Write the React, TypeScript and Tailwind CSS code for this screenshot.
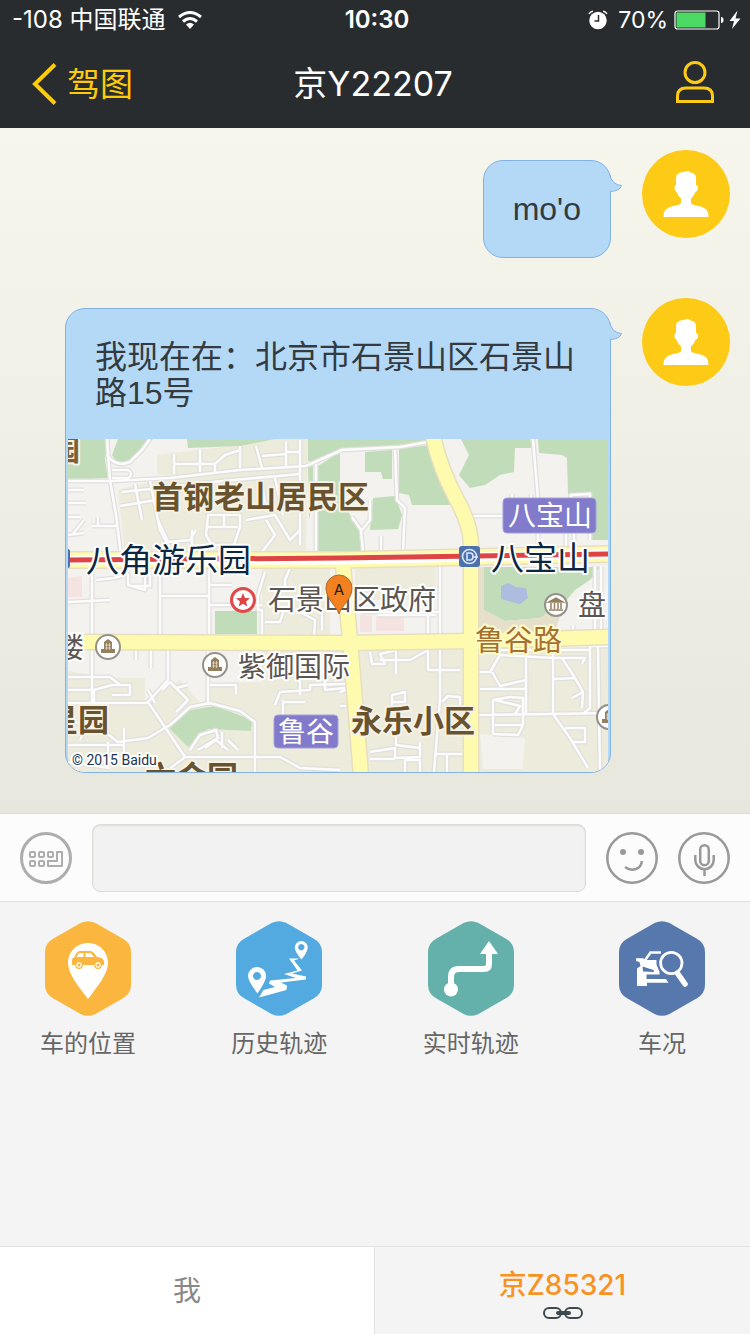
import type { ReactNode } from 'react';

const casing = '#e0dfdd';

const minorRoads = [
  'M68 481 L112 481 L170 478 L240 470 L306 466 L342 450 L400 447 L428 442',
  'M107 439 L110 480 L116 515 L121 555',
  'M107 455 Q116 468 130 462 L142 450 L150 439',
  'M112 470 L128 470 Q134 474 128 478 L112 478',
  'M68 490 H84 M68 503 H86 M68 517 H80 M84 520 L72 535 M68 535 L84 533',
  'M92 526 L116 526 M98 517 V526',
  'M174 454 V474 M200 449 V472 M240 446 V468 M174 464 L215 464 L225 455 L240 450 M215 464 V472',
  'M122 492 L160 488 L222 481 L300 474 M150 481 L160 530 L168 545 M120 506 L156 500 M135 484 L142 520',
  'M158 520 L168 542 L190 540 L196 530 M192 530 V545',
  'M208 515 H240 V527 L234 545 H212 L206 535 Z M206 527 H238 M224 515 V527',
  'M246 520 L275 515 L290 540 L300 530 M266 520 L275 535 L262 552 M275 478 L283 515 M262 480 L266 512 M300 440 V545 M286 442 V466 M286 452 H300 M256 446 L262 468 M262 456 L286 454',
  'M316 464 V552',
  'M395 450 L397 500 L405 508 L403 552 M352 517 L361 530 L363 552 M370 500 V520 L362 530 M381 536 V552',
  'M533 439 L538 500 L538 552 M512 494 V505 M531 494 V510 M470 516 H503 M571 500 V495 L590 494 V540 M566 533 V552 M574 533 V552',
  'M92 566 V640 M68 602 L110 600 M96 580 L114 578 L128 574 V585 L145 590 V566 M150 572 V586 H132',
  'M160 566 V640 M209 566 V640 M209 596 H160 M209 585 L232 585 M209 605 H262 M265 572 L258 595 V610 H262 V638 M290 568 L285 580 V590',
  'M265 622 H280 L284 610 M300 612 L315 620 L314 635 M322 612 V630 M288 606 V612',
  'M440 566 V640 M362 612 H440 M378 615 H436 M428 590 V640',
  'M595 566 V640 M601 566 V640 M573 625 V632',
  'M92 646 V715 L80 740 M136 650 V660 M151 650 V668 M168 650 V680 L148 702 L185 757 L168 770 M208 646 V705',
  'M68 690 H94 M68 703 L148 703 M68 720 L105 732 L118 742 L148 738 L170 725 L190 707 L210 703 L240 711 L255 722 V772',
  'M68 677 H110 L120 685 H130 M94 703 V690 L112 685 H130 V695 H112',
  'M148 690 L155 703 M162 690 L170 682 L188 700 L176 712 M176 688 L188 685',
  'M124 728 V758 L90 760 M124 745 H68 M108 742 V760',
  'M185 757 H280 L300 768 L340 770 M190 750 L200 735 L216 730 L218 738 L198 750 M205 748 L216 740 L228 750 M228 740 L238 750 M222 732 V748',
  'M210 685 H236 V694 M275 705 L280 692 L310 690 V685 L345 684 M283 702 H305 M283 716 V700 M300 680 V695 M325 665 V690 L345 688',
  'M370 652 L372 664 L385 664 L380 654 L396 650 V674 M380 660 H410 L428 650 V670 L460 670 M428 655 V670',
  'M440 646 V700 L434 772 M392 712 V695 L405 692 V702 H392 M442 702 L448 696 L460 697 V706 M396 735 V745 L420 748 M370 752 L395 748 V758 L420 757 V742 M370 759 H395 M405 772 V760 H420 V772 M434 754 H462 M447 754 V772',
  'M478 650 H590 M478 672 L490 672 L500 655 L554 658 L585 658 L582 664 M492 672 L500 686 L526 680 M480 689 H526 M526 658 V714 M553 652 V714 M554 679 L575 678 M562 658 L575 678 L583 692 L572 698 M583 692 L582 708',
  'M478 715 L553 714 L608 713 M493 734 V700 L510 697 L523 698 V725 L518 735 L493 734 M495 725 H523 M495 700 L520 706 L515 714',
  'M553 714 L570 738 L588 768 M565 728 H585 V742 H572',
  'M598 646 L600 772 M608 646 H590 V708 L583 714',
  'M68 762 L110 768 M340 706 H346 M340 692 L346 690',
];

const palette = {
  land: '#f3f2ef',
  block: '#edebdb',
  green: '#c1dcb8',
  road: '#fffbae',
  roadEdge: '#e7dfc0',
};

const majorRoads = [
  'M433 436 Q440 468 456 498 Q471 525 471 545 V776',
  'M343 565 L350 640 L361 776',
  'M84 642 L340 643 L470 641 L612 637',
];

function MapText({ x, y, size, fill, weight = 400, halo = '#ffffff', anchor = 'start', children }: {
  x: number; y: number; size: number; fill: string; weight?: number; halo?: string;
  anchor?: 'start' | 'middle' | 'end'; children: ReactNode;
}) {
  return (
    <text x={x} y={y} fontSize={size} fill={fill} fontWeight={weight} textAnchor={anchor}
      stroke={halo} strokeWidth={halo === 'none' ? 0 : 4} strokeLinejoin="round" paintOrder="stroke">
      {children}
    </text>
  );
}

function Building({ x, y }: { x: number; y: number }) {
  return (
    <g transform={`translate(${x} ${y})`}>
      <circle r="12" fill="#fff" stroke="#95918a" strokeWidth="2" />
      <path d="M-7 6 V2 H-4 V-5 L0 -8 L4 -5 V2 H7 V6Z" fill="#94805f" />
      <path d="M-1.500 -4 V3 M1.500 -4 V3 M-3 -2 H3 M-3 1 H3" stroke="#e9e2d5" strokeWidth=".7" />
    </g>
  );
}

function LocationMap() {
  return (
    <svg viewBox="68 439 540 333" className="block w-full" role="img" aria-label="石景山区地图">
      <rect x="68" y="439" width="540" height="334" fill={palette.land} />
      <g fill={palette.block}>
        <path d="M157 455 L240 445 L275 439 H308 L306 555 H125 L118 490 L172 476 L157 474Z" />
        <path d="M68 671 L110 678 H145 V703 L160 690 L180 680 L205 708 L212 684 L262 680 V648 H608 V773 H68Z" />
        <path d="M355 567 H436 V600 H355Z M262 567 H330 V638 H262Z" />
      </g>
      <path d="M480 734 L525 738 L523 769 H483Z M212 650 H262 V682 H212Z" fill={palette.land} />
      <g fill={palette.green}>
        <path d="M77 439 H108 L105 460 L108 478 L68 480 V461 H80Z" />
        <path d="M118 439 H153 L134 461 L118 464 L112 455Z" />
        <path d="M187 439 H275 L240 446 L188 448Z" />
        <path d="M308 439 H428 L420 444 L340 449 L316 462 L308 461Z" />
        <path d="M318 466 L340 452 V490 L350 515 L360 530 L361 552 H318Z" />
        <path d="M308 466 H313 V500 L309 520Z" />
        <path d="M365 452 L392 450 V479 H383 L381 472 H365Z" />
        <path d="M399 449 L430 445 L450 505 H412 L409 495 L399 493Z" />
        <path d="M373 498 L395 496 L402 515 L398 529 L370 530Z" />
        <path d="M461 439 H530 L532 448 H515 L514 472 L500 475 L485 485 L470 488 L459 475 L469 455Z" />
        <path d="M538 439 H608 V540 H592 L590 495 L568 494 L567 458 L562 455 L539 453Z" />
        <path d="M484 567 H600 L590 580 L575 590 L560 608 L540 618 L505 621 L484 610Z" />
        <path d="M215 611 H257 V634 H215Z" />
        <path d="M168 727 L185 711 L215 706 L252 720 L251 731 L208 729 L188 747Z" />
      </g>
      <path d="M478 567 H484 V610 L505 621 L540 618 L565 600 L555 632 H478Z" fill="#e6dfca" />
      <path d="M501 586 L508 583 L516 587 L526 588 L528 598 L520 604 L512 602 L501 599Z" fill="#adbcdf" />
      <path d="M68 578 L82 576 V597 H68Z M376 616 H404 V631 H376Z M360 614 L372 616 V632 H360Z" fill="#f5e3e1" />
      <g fill="none" strokeLinejoin="round">
        {minorRoads.map((d) => <path key={d} d={d} stroke={casing} strokeWidth="5" />)}
        {minorRoads.map((d) => <path key={d} d={d} stroke="#fcfcfc" strokeWidth="2.500" />)}
      </g>
      <g fill="none">
        {majorRoads.map((d) => <path key={d} d={d} stroke={palette.roadEdge} strokeWidth="17" />)}
        <path d="M66 560 H340 L610 554" stroke={palette.roadEdge} strokeWidth="18" />
        {majorRoads.map((d) => <path key={d} d={d} stroke={palette.road} strokeWidth="14" />)}
        <path d="M66 560 H340 L610 554" stroke={palette.road} strokeWidth="15" />
        <path d="M66 560 H340 L610 554" stroke="#fff" strokeWidth="9" />
        <path d="M66 560 L340 558 L610 554" stroke="#df4444" strokeWidth="5" />
      </g>

      <path d="M66 549 H68 Q70 549 70 552 V565 Q70 568 68 568Z" fill="#4a6fb0" />
      <rect x="459" y="546" width="21" height="21" rx="3" fill="#4c72ae" />
      <circle cx="469.500" cy="556.500" r="7" fill="none" stroke="#dce6f5" strokeWidth="1.600" />
      <path d="M467 553 V560 H470 Q473 560 473 556.500 Q473 553 470 553Z M472 557 H478" fill="none" stroke="#dce6f5" strokeWidth="1.600" />

      <g fill="#827bcb" stroke="#a5a0dc" strokeWidth="1">
        <rect x="503" y="498" width="93" height="35" rx="4" />
        <rect x="274" y="715" width="64" height="33" rx="4" />
      </g>
      <MapText x={550} y={526} size={28} fill="#fff" halo="none" anchor="middle">八宝山</MapText>
      <MapText x={306} y={742} size={28} fill="#fff" halo="none" anchor="middle">鲁谷</MapText>

      <MapText x={152} y={508} size={31} weight={700} fill="#69532f" halo="#f6f2e6">首钢老山居民区</MapText>
      <MapText x={351} y={732} size={31} weight={700} fill="#69532f" halo="#f6f2e6">永乐小区</MapText>
      <MapText x={109} y={731} size={31} weight={700} fill="#69532f" halo="#f6f2e6" anchor="end">星园</MapText>
      <MapText x={80} y={461} size={29} weight={700} fill="#7d5f35" halo="#f6f2e6" anchor="end">园</MapText>
      <MapText x={145} y={788} size={31} weight={700} fill="#69532f" halo="#f6f2e6">六合园</MapText>
      <MapText x={86} y={572} size={33} fill="#0d2740">八角游乐园</MapText>
      <MapText x={491} y={570} size={33} fill="#0d2740">八宝山</MapText>
      <MapText x={268} y={610} size={28} fill="#5d5552">石景山区政府</MapText>
      <MapText x={238} y={677} size={28} fill="#5d5552">紫御国际</MapText>
      <MapText x={84} y={658} size={28} fill="#5d5552" anchor="end">楼</MapText>
      <MapText x={578} y={615} size={28} fill="#5d5552">盘</MapText>
      <MapText x={475} y={651} size={29} fill="#a6712f" halo="#fffbc6">鲁谷路</MapText>

      <Building x={108} y={647} />
      <Building x={215} y={665} />
      <Building x={609} y={717} />
      <circle cx="556" cy="605" r="11" fill="#fff" stroke="#95918a" strokeWidth="2" />
      <path d="M549 602 L556 598 L563 602Z M551 603 V609 M554.500 603 V609 M558 603 V609 M561 603 V609 M549 610 H563" fill="#94805f" stroke="#94805f" strokeWidth="1.500" />
      <circle cx="243" cy="600" r="11.500" fill="#fff" stroke="#df4a4a" strokeWidth="3" />
      <path d="M243 593 L245 598 L250 598.300 L246 601.500 L247.400 606.500 L243 603.700 L238.600 606.500 L240 601.500 L236 598.300 L241 598Z" fill="#df4444" />

      <path d="M339 614 C336 605 326 599 326 588 A13 13 0 0 1 352 588 C352 599 342 605 339 614Z" fill="#f4811f" stroke="#a9672f" strokeWidth="1" />
      <text x="339" y="595" fontSize="15" textAnchor="middle" fill="#222">A</text>
      <g className="font-[Roboto,sans-serif]">
        <MapText x={72} y={765} size={14} fill="#20344f">© 2015 Baidu</MapText>
      </g>
    </svg>
  );
}

function Avatar() {
  return (
    <svg viewBox="0 0 88 88" className="size-[88px] shrink-0" role="img" aria-label="头像">
      <circle cx="44" cy="44" r="44" fill="#fdca16" />
      <path d="M34.500 25 Q38 21.500 42 22 Q46 20 48.500 22.500 Q54 22.500 54 29 V35 Q56.500 35 56 39 Q55 42 53.500 42 Q52 46 49 48.500 V53 Q50 55 57 56 Q67 58 66.500 67 H21.500 Q21 58 31 56 Q38 55 39 53 V48.500 Q36 46 34.500 42 Q32.500 41 32.300 37.500 Q32.300 35 34 35 V30 Q34 27 34.500 25Z" fill="#fff" />
    </svg>
  );
}

function Message({ text, children }: { text: string; children?: ReactNode }) {
  return (
    <li className="flex items-start justify-end gap-[31px]">
      <div className="relative mt-[10px] min-w-0">
        <div className="overflow-hidden rounded-[20px] border border-[#82b1e6] bg-[#b3d9f7]">
          <p className="px-[29px] py-[30px] font-['Liberation_Sans','Noto_Sans_CJK_SC',sans-serif] text-[32px] leading-9 text-[#343a3e]">{text}</p>
          {children && <div className="-mt-[2px] px-[2px]">{children}</div>}
        </div>
        <svg viewBox="0 0 14 20" className="absolute top-[13px] -right-[11px] h-5 w-[14px]" aria-hidden="true">
          <path d="M0 0 L2 2 Q4 12 13 12.500 Q12 17.500 2 18.500 L0 20Z" fill="#b3d9f7" />
          <path d="M1.500 1 Q4 12 13.500 12.500 Q12 18 2.500 18.500" fill="none" stroke="#82b1e6" />
        </svg>
      </div>
      <Avatar />
    </li>
  );
}

function Hexagon({ color, children }: { color: string; children: ReactNode }) {
  return (
    <svg viewBox="0 0 86 95" className="h-[95px] w-[86px]" aria-hidden="true">
      <path d="M36 1.800 Q43 -1.500 50 1.800 L77.500 17.500 Q86 22 86 31 V64 Q86 73 77.500 77.500 L50 93.200 Q43 96.500 36 93.200 L8.500 77.500 Q0 73 0 64 V31 Q0 22 8.500 17.500Z" fill={color} />
      {children}
    </svg>
  );
}

const actions = [
  {
    label: '车的位置',
    color: '#fab63f',
    icon: (
      <>
        <path d="M43 22 C54.500 22 63 31 63 42 C63 53 52 66 43 78 C34 66 23 53 23 42 C23 31 31.500 22 43 22Z" fill="#fff" />
        <path d="M27 44 V38 L29 36.500 L31.500 32 Q32.500 30 35 30 H45 Q47.500 30 49 32 L52 36 Q59 36.500 59 41 V44Z" fill="#fab63f" />
        <path d="M34 32 H38.500 V36 H31.500Z M40.500 32 H45.500 L49 36 H40.500Z" fill="#fff" />
        <circle cx="34" cy="44" r="3.300" fill="#fff" stroke="#fab63f" strokeWidth="1.200" />
        <circle cx="53" cy="44" r="3.300" fill="#fff" stroke="#fab63f" strokeWidth="1.200" />
        <circle cx="34" cy="44" r="1.500" fill="#fab63f" />
        <circle cx="53" cy="44" r="1.500" fill="#fab63f" />
      </>
    ),
  },
  {
    label: '历史轨迹',
    color: '#53aae0',
    icon: (
      <>
        <g fill="#fff" fillRule="evenodd">
          <path d="M65.300 20 A6.500 6.500 0 0 1 71.800 26.500 Q71.500 31 65.500 38.500 Q59 31 58.800 26.500 A6.500 6.500 0 0 1 65.300 20Z M65.300 23 A3.200 3.200 0 1 0 65.310 23Z" />
          <path d="M21 46 A9 9 0 0 1 30.200 55 Q30 60 21.500 72.500 Q12 60 12 55 A9 9 0 0 1 21 46Z M21 51 A4 4 0 1 0 21.010 51Z" />
          <path d="M23 76.500 L27.500 69 L39 66 L33 62.500 L34 59.500 L60 57 L48 53 L61.500 49.500 L53 37.500 H63.500 L58 39.500 L66 49.500 L56 52.500 L70 55.500 V58.500 L45 61.500 L51 64.500 L50.500 69Z" />
        </g>
      </>
    ),
  },
  {
    label: '实时轨迹',
    color: '#64b0aa',
    icon: (
      <>
        <path d="M23 68 V56 Q23 48 31 48 H56 Q61 48 61 43 V30" fill="none" stroke="#fff" strokeWidth="6" />
        <circle cx="23" cy="68.500" r="7" fill="#fff" />
        <path d="M61 20 L70 33 H52Z" fill="#fff" />
      </>
    ),
  },
  {
    label: '车况',
    color: '#5778ac',
    icon: (
      <>
        <path d="M17 37.300 H24 L26.500 39 H37.500 V43.500 L40.500 50.500 V53.500 H27.500 V58 H47 L49.500 61.700 H28 V65 H18 V47.500 L21.500 45 L20.500 41 L17 40Z" fill="#fff" />
        <path d="M23.500 45.500 L34.500 49 L35 51 L24 50.500Z" fill="#5778ac" />
        <path d="M25.500 40 L31.500 31.500 H42" fill="none" stroke="#fff" strokeWidth="2.500" />
        <circle cx="52.300" cy="42" r="12.500" fill="#5778ac" stroke="#5778ac" strokeWidth="3" />
        <circle cx="52.300" cy="42" r="10.700" fill="none" stroke="#fff" strokeWidth="2.800" />
        <path d="M59 53 L66 63" stroke="#fff" strokeWidth="5.500" strokeLinecap="round" />
      </>
    ),
  },
];

function StatusBar() {
  return (
    <div className="grid h-10 grid-cols-[1fr_auto_1fr] items-center pr-2 pl-3 text-[24px] leading-10 text-white">
      <div className="flex items-center gap-3 whitespace-nowrap">
        <span>-108 中国联通</span>
        <svg viewBox="0 0 24 18" className="h-[18px] w-6" aria-label="Wi-Fi" role="img">
          <g fill="none" stroke="#fff" strokeWidth="3">
            <path d="M1 6 Q12 -3 23 6" />
            <path d="M5 10.500 Q12 4.500 19 10.500" />
          </g>
          <path d="M8 13.500 Q12 10 16 13.500 L12 18Z" fill="#fff" />
        </svg>
      </div>
      <time className="font-semibold">10:30</time>
      <div className="flex items-center justify-end text-[23px]">
        <svg viewBox="0 0 20 20" className="mr-[10px] size-5" role="img" aria-label="闹钟">
          <circle cx="10" cy="10.500" r="8.700" fill="#fff" />
          <path d="M1 4 Q2 1.500 5 1.200 M19 4 Q18 1.500 15 1.200" stroke="#fff" strokeWidth="1.400" fill="none" />
          <path d="M10.500 5 V11 H6.500" fill="none" stroke="#282c2f" strokeWidth="1.500" />
        </svg>
        <span>70%</span>
        <svg viewBox="0 0 68 20" className="ml-[6px] h-5 w-[68px]" role="img" aria-label="正在充电">
          <rect x="1" y="1" width="44" height="18" rx="2.500" fill="none" stroke="#fff" strokeWidth="1.200" />
          <rect x="2.500" y="2.500" width="29" height="15" fill="#4cd964" />
          <path d="M47 7 Q49.500 7 49.500 10 Q49.500 13 47 13Z" fill="#fff" />
          <path d="M63.500 .500 L55.500 11 H60 L58 19 L66.500 8.500 H61.500Z" fill="#fff" />
        </svg>
      </div>
    </div>
  );
}

export default function App() {
  return (
    <div className="flex min-h-screen flex-col bg-[#f4f4f4] font-[Inter,'Noto_Sans_CJK_SC',sans-serif]">
      <header className="bg-[#282c2f]">
        <StatusBar />
        <nav className="grid h-[88px] grid-cols-[1fr_auto_1fr] items-center pr-9 pl-8">
          <button type="button" className="flex items-center gap-[10px] justify-self-start text-[33px] leading-[44px] text-[#fecb0a]">
            <svg viewBox="0 0 25 42" className="h-[42px] w-[25px]" aria-hidden="true">
              <path d="M23 1.500 L3 21 L23 40.500" fill="none" stroke="#fecb0a" strokeWidth="4" />
            </svg>
            驾图
          </button>
          <h1 className="text-[34px] leading-[44px] text-white">京Y22207</h1>
          <button type="button" aria-label="个人资料" className="justify-self-end pb-1">
            <svg viewBox="0 0 38 42" className="h-[42px] w-[38px]" fill="none" stroke="#fdca16" strokeWidth="3" aria-hidden="true">
              <circle cx="19" cy="11.500" r="10" />
              <path d="M1.500 40.500 V35 Q1.500 27 10 27 H28 Q36.500 27 36.500 35 V40.500Z" />
            </svg>
          </button>
        </nav>
      </header>

      <main className="bg-linear-to-b from-[#f7f6ec] to-[#e7e7de] pt-[22px] pr-5 pb-10 pl-[65px]">
        <ul className="flex flex-col gap-10">
          <Message text="mo'o" />
          <Message text="我现在在：北京市石景山区石景山路15号">
            <LocationMap />
          </Message>
        </ul>
      </main>

      <form className="flex items-center gap-5 border-y border-[#dcdcd9] bg-[#fcfcfc] px-5 pt-[10px] pb-[9px]" onSubmit={(e) => e.preventDefault()}>
        <button type="button" aria-label="键盘" className="shrink-0">
          <svg viewBox="0 0 52 52" className="size-[52px]" fill="none" stroke="#adadad" strokeWidth="2" aria-hidden="true">
            <circle cx="26" cy="26" r="24.500" strokeWidth="3" />
            <rect x="10" y="20" width="5" height="5" rx="1" />
            <rect x="19" y="20" width="5" height="5" rx="1" />
            <rect x="28" y="20" width="5" height="5" rx="1" />
            <rect x="10" y="29" width="5" height="5" rx="1" />
            <rect x="19" y="29" width="5" height="5" rx="1" />
            <path d="M37 20 H42 V34 H28 V29 H37Z" strokeLinejoin="round" />
          </svg>
        </button>
        <input type="text" aria-label="消息" className="h-[68px] min-w-0 flex-1 rounded-lg border border-[#dcdcd8] bg-[#f2f2f2] px-4 text-[32px] shadow-[inset_0_1px_2px_#dcdcd8] outline-none" />
        <button type="button" aria-label="表情" className="shrink-0">
          <svg viewBox="0 0 52 52" className="size-[52px]" fill="none" stroke="#999" strokeWidth="2.500" aria-hidden="true">
            <circle cx="26" cy="26" r="24.700" />
            <circle cx="17" cy="20" r="3" fill="#999" stroke="none" />
            <circle cx="35" cy="20" r="3" fill="#999" stroke="none" />
            <path d="M19 35 Q24 39 30 37 Q35.500 35 35.800 29" />
          </svg>
        </button>
        <button type="button" aria-label="语音" className="shrink-0">
          <svg viewBox="0 0 52 52" className="size-[52px]" fill="none" stroke="#999" strokeWidth="2.500" aria-hidden="true">
            <circle cx="26" cy="26" r="24.700" />
            <rect x="22.200" y="13.200" width="8.600" height="20" rx="4.300" />
            <path d="M17.300 23 V28 A9.200 9.200 0 0 0 35.700 28 V23 M26.500 37 V44" />
          </svg>
        </button>
      </form>

      <section className="flex flex-1 items-start justify-between px-10 pt-[19px]">
        {actions.map((a) => (
          <button key={a.label} type="button" className="flex w-24 flex-col items-center gap-3 text-[24px] leading-8 whitespace-nowrap text-[#666]">
            <Hexagon color={a.color}>{a.icon}</Hexagon>
            {a.label}
          </button>
        ))}
      </section>

      <footer className="grid h-[88px] grid-cols-2 border-t border-[#e2e2e2]">
        <button type="button" className="border-r border-[#e2e2e2] bg-white text-[28px] leading-9 text-[#888]">我</button>
        <button type="button" className="flex flex-col items-center justify-center gap-1 pt-1 text-[28px] leading-9 font-medium text-[#f7931e]">
          京Z85321
          <svg viewBox="0 0 40 12" className="h-3 w-10" fill="none" stroke="#3f4a4f" strokeWidth="2" aria-hidden="true">
            <rect x="1" y="1" width="17" height="10" rx="5" />
            <rect x="22" y="1" width="17" height="10" rx="5" />
            <path d="M15 6 H26" strokeWidth="4" strokeLinecap="round" />
          </svg>
        </button>
      </footer>
    </div>
  );
}
